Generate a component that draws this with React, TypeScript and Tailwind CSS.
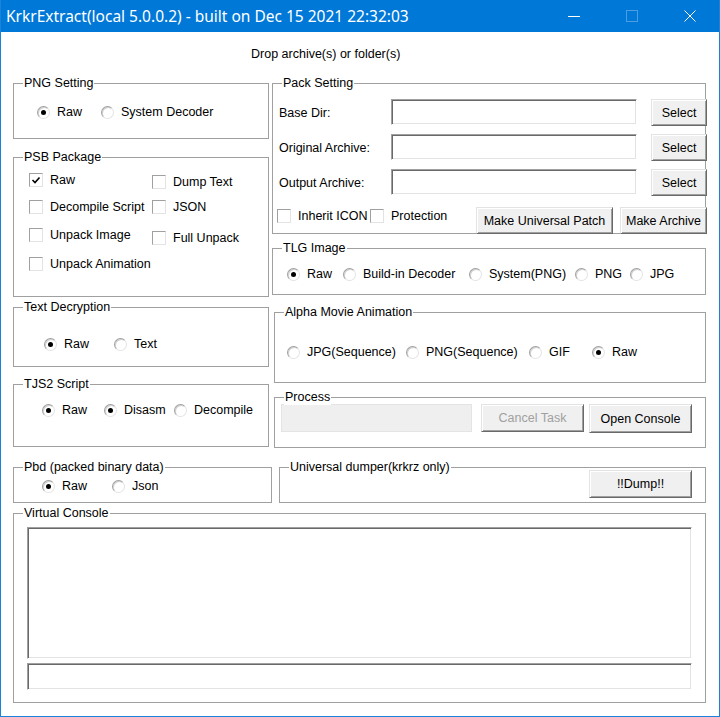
import type { ReactNode } from "react";

function Group({
  title,
  className,
  children,
}: {
  title: string;
  className: string;
  children?: ReactNode;
}) {
  return (
    <div className={`relative shrink-0 border border-[#a0a0a0] ${className}`}>
      <span className="absolute -top-[9px] left-[9px] whitespace-nowrap bg-white px-[1px] leading-[16px]">
        {title}
      </span>
      {children}
    </div>
  );
}

function Radio({
  label,
  checked = false,
  className = "",
}: {
  label: string;
  checked?: boolean;
  className?: string;
}) {
  return (
    <div className={`flex h-[16px] shrink-0 items-center whitespace-nowrap ${className}`}>
      <span className="mr-[7px] flex h-[13px] w-[13px] shrink-0 items-center justify-center rounded-full border border-t-[#a0a0a0] border-r-[#e3e3e3] border-b-[#e3e3e3] border-l-[#a0a0a0] bg-white shadow-[inset_1px_1px_0_#d0d0d0]">
        {checked && <span className="h-[5px] w-[5px] rounded-full bg-black" />}
      </span>
      {label}
    </div>
  );
}

function Check({
  label,
  checked = false,
  className = "",
}: {
  label: string;
  checked?: boolean;
  className?: string;
}) {
  return (
    <div className={`flex h-[16px] shrink-0 items-center whitespace-nowrap ${className}`}>
      <span className="mr-[7px] flex h-[14px] w-[14px] shrink-0 items-center justify-center border border-t-[#a0a0a0] border-r-[#e3e3e3] border-b-[#e3e3e3] border-l-[#a0a0a0] bg-white">
        {checked && (
          <svg width="10" height="10" viewBox="0 0 10 10">
            <path d="M1.5 5 L4 7.5 L8.5 2.5" fill="none" stroke="#000" strokeWidth="1.6" />
          </svg>
        )}
      </span>
      {label}
    </div>
  );
}

function Button({
  children,
  className,
  disabled = false,
}: {
  children: ReactNode;
  className: string;
  disabled?: boolean;
}) {
  return (
    <div
      className={`flex shrink-0 items-center justify-center whitespace-nowrap border border-t-[#e3e3e3] border-r-[#696969] border-b-[#696969] border-l-[#e3e3e3] bg-[#f0f0f0] shadow-[inset_1px_1px_0_#ffffff,inset_-1px_-1px_0_#a0a0a0] ${
        disabled ? "text-[#a0a0a0]" : "text-black"
      } ${className}`}
    >
      {children}
    </div>
  );
}

function TextBox({ className }: { className: string }) {
  return (
    <div
      className={`shrink-0 border border-t-[#a0a0a0] border-r-white border-b-white border-l-[#a0a0a0] bg-white shadow-[inset_1px_1px_0_#696969,inset_-1px_-1px_0_#e3e3e3] ${className}`}
    />
  );
}

function TitleBar() {
  return (
    <div className="flex h-[32px] items-center bg-[#0078d7] text-white">
      <span className="flex-1 pl-[5px] font-['Noto_Sans',sans-serif] text-[15.5px] leading-[20px]">
        KrkrExtract(local 5.0.0.2) - built on Dec 15 2021 22:32:03
      </span>
      <div className="flex h-full">
        <div className="flex w-[58px] items-center justify-center">
          <svg width="12" height="12" viewBox="0 0 12 12">
            <path d="M0 6.5 H12" stroke="#fff" strokeWidth="1" />
          </svg>
        </div>
        <div className="flex w-[58px] items-center justify-center">
          <svg width="12" height="12" viewBox="0 0 12 12">
            <rect x="0.5" y="0.5" width="11" height="11" fill="none" stroke="#4c9ee3" strokeWidth="1" />
          </svg>
        </div>
        <div className="flex w-[58px] items-center justify-center">
          <svg width="12" height="12" viewBox="0 0 12 12">
            <path d="M0.5 0.5 L11.5 11.5 M11.5 0.5 L0.5 11.5" stroke="#fff" strokeWidth="1" />
          </svg>
        </div>
      </div>
    </div>
  );
}

function LeftColumn() {
  return (
    <div className="ml-[12px] flex w-[256px] shrink-0 flex-col">
      <Group title="PNG Setting" className="h-[56px] w-[256px]">
        <div className="flex pt-[20px] pl-[23px]">
          <Radio label="Raw" checked className="w-[64px]" />
          <Radio label="System Decoder" />
        </div>
      </Group>

      <Group title="PSB Package" className="mt-[18px] h-[140px] w-[256px]">
        <div className="flex pl-[15px]">
          <div className="flex w-[123px] flex-col pt-[14px]">
            <Check label="Raw" checked />
            <Check label="Decompile Script" className="mt-[11px]" />
            <Check label="Unpack Image" className="mt-[12px]" />
            <Check label="Unpack Animation" className="mt-[13px]" />
          </div>
          <div className="flex flex-col pt-[16px]">
            <Check label="Dump Text" />
            <Check label="JSON" className="mt-[9px]" />
            <Check label="Full Unpack" className="mt-[15px]" />
          </div>
        </div>
      </Group>

      <Group title="Text Decryption" className="mt-[10px] h-[60px] w-[256px]">
        <div className="flex pt-[28px] pl-[30px]">
          <Radio label="Raw" checked className="w-[70px]" />
          <Radio label="Text" />
        </div>
      </Group>

      <Group title="TJS2 Script" className="mt-[17px] h-[63px] w-[256px]">
        <div className="flex pt-[17px] pl-[28px]">
          <Radio label="Raw" checked className="w-[62px]" />
          <Radio label="Disasm" checked className="w-[70px]" />
          <Radio label="Decompile" />
        </div>
      </Group>

      <Group title="Pbd (packed binary data)" className="mt-[20px] h-[36px] w-[259px]">
        <div className="flex pt-[10px] pl-[28px]">
          <Radio label="Raw" checked className="w-[70px]" />
          <Radio label="Json" />
        </div>
      </Group>
    </div>
  );
}

function PathRow({ label, className = "" }: { label: string; className?: string }) {
  return (
    <div className={`flex h-[27px] items-center ${className}`}>
      <span className="w-[112px] shrink-0 whitespace-nowrap">{label}</span>
      <TextBox className="h-[26px] w-[246px] self-start" />
      <Button className="ml-[14px] h-[27px] w-[56px]">Select</Button>
    </div>
  );
}

function RightColumn() {
  return (
    <div className="ml-[3px] flex w-[434px] shrink-0 flex-col">
      <Group title="Pack Setting" className="h-[151px] w-[434px]">
        <div className="flex flex-col pt-[15px] pl-[6px]">
          <PathRow label="Base Dir:" />
          <PathRow label="Original Archive:" className="mt-[8px]" />
          <PathRow label="Output Archive:" className="mt-[8px]" />
          <div className="-ml-[2px] mt-[11px] flex h-[27px] items-start">
            <Check label="Inherit ICON" className="mt-[1px] w-[93px]" />
            <Check label="Protection" className="mt-[1px] w-[106px]" />
            <Button className="h-[27px] w-[137px]">Make Universal Patch</Button>
            <Button className="ml-[7px] h-[27px] w-[87px]">Make Archive</Button>
          </div>
        </div>
      </Group>

      <Group title="TLG Image" className="mt-[14px] h-[47px] w-[434px]">
        <div className="flex pt-[17px] pl-[14px]">
          <Radio label="Raw" checked className="w-[56px]" />
          <Radio label="Build-in Decoder" className="w-[126px]" />
          <Radio label="System(PNG)" className="w-[106px]" />
          <Radio label="PNG" className="w-[55px]" />
          <Radio label="JPG" />
        </div>
      </Group>

      <Group title="Alpha Movie Animation" className="mt-[17px] ml-[2px] h-[71px] w-[432px]">
        <div className="flex pt-[31px] pl-[12px]">
          <Radio label="JPG(Sequence)" className="w-[119px]" />
          <Radio label="PNG(Sequence)" className="w-[123px]" />
          <Radio label="GIF" className="w-[63px]" />
          <Radio label="Raw" checked />
        </div>
      </Group>

      <Group title="Process" className="mt-[14px] ml-[2px] h-[51px] w-[432px]">
        <div className="flex pt-[6px] pl-[6px]">
          <div className="h-[28px] w-[191px] shrink-0 border border-[#e4e4e4] bg-[#efefef]" />
          <Button disabled className="ml-[9px] h-[28px] w-[103px]">
            Cancel Task
          </Button>
          <Button className="ml-[5px] h-[29px] w-[103px]">Open Console</Button>
        </div>
      </Group>

      <Group title="Universal dumper(krkrz only)" className="mt-[19px] ml-[7px] h-[36px] w-[427px]">
        <div className="flex justify-end pt-[2px] pr-[13px]">
          <Button className="h-[28px] w-[103px]">!!Dump!!</Button>
        </div>
      </Group>
    </div>
  );
}

export default function App() {
  return (
    <div className="h-[717px] w-[720px] overflow-hidden border-x border-b border-[#1a82d8] bg-white font-['Liberation_Sans',Arial,sans-serif] text-[12.5px] leading-[16px] text-black">
      <TitleBar />

      <div className="h-[51px] pt-[14px] pl-[250px]">Drop archive(s) or folder(s)</div>

      <div className="flex items-start">
        <LeftColumn />
        <RightColumn />
      </div>

      <Group title="Virtual Console" className="mt-[10px] ml-[12px] h-[190px] w-[693px]">
        <div className="flex flex-col pt-[13px] pl-[13px]">
          <TextBox className="h-[132px] w-[665px]" />
          <TextBox className="mt-[4px] h-[27px] w-[665px]" />
        </div>
      </Group>
    </div>
  );
}
